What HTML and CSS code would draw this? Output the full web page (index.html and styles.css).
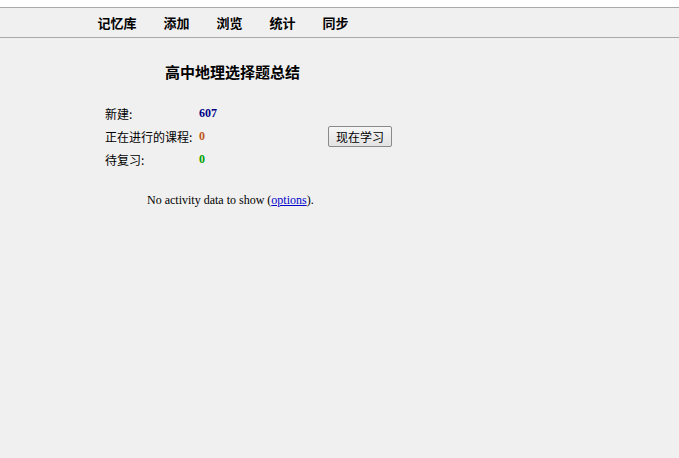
FILE: index.html
```html
<!DOCTYPE html>
<html lang="zh">
<head>
    <meta charset="UTF-8">
    <title>高中地理选择题总结</title>
    <link rel="stylesheet" href="styles.css">
</head>
<body>
    <div class="topbar">
        <nav class="nav">
            <a class="nav-item" href="#">记忆库</a>
            <a class="nav-item" href="#">添加</a>
            <a class="nav-item" href="#">浏览</a>
            <a class="nav-item" href="#">统计</a>
            <a class="nav-item" href="#">同步</a>
        </nav>
    </div>
    <div class="overview">
        <h3 class="deck-title">高中地理选择题总结</h3>
        <div class="stats">
            <div class="counts">
                <div class="row"><span class="label">新建:</span><b class="num new">607</b></div>
                <div class="row"><span class="label">正在进行的课程:</span><b class="num learn">0</b></div>
                <div class="row"><span class="label">待复习:</span><b class="num review">0</b></div>
            </div>
            <button class="study-btn">现在学习</button>
        </div>
        <p class="activity">No activity data to show (<a href="#">options</a>).</p>
    </div>
</body>
</html>
```

FILE: styles.css
```css
body {
    margin: 0;
    border-top: 7px solid #fff;
    background-color: #f0f0f0;
    font-family: "Liberation Serif", "Noto Sans CJK SC", serif;
    font-size: 12px;
    color: #000;
}

.topbar {
    height: 29px;
    border-top: 1px solid #a9a9a9;
    border-bottom: 1px solid #a9a9a9;
    background-color: #f0f0f0;
}

.nav {
    display: flex;
    padding-left: 84px;
    height: 29px;
    align-items: center;
}

.nav-item {
    padding: 0 13.5px;
    font-family: "Noto Sans CJK SC", sans-serif;
    font-size: 13px;
    font-weight: bold;
    color: #000;
    text-decoration: none;
}

.overview {
    padding-left: 105px;
}

.deck-title {
    margin: 24px 0 0 60px;
    font-family: "Noto Sans CJK SC", sans-serif;
    font-size: 15px;
    font-weight: bold;
    line-height: 20px;
}

.stats {
    display: flex;
    align-items: center;
    margin-top: 20px;
}

.counts {
    width: 223px;
}

.row {
    display: flex;
    height: 23px;
    align-items: center;
}

.label {
    width: 94px;
    font-family: "Noto Sans CJK SC", sans-serif;
    font-size: 12px;
}

.num {
    font-family: "Liberation Serif", serif;
    font-size: 12px;
}

.new { color: #000088; }
.learn { color: #c35617; }
.review { color: #00a000; }

.study-btn {
    width: 64px;
    height: 21px;
    padding: 0;
    font-family: "Noto Sans CJK SC", sans-serif;
    font-size: 12px;
    background: linear-gradient(#f6f6f6, #e2e2e2);
    border: 1px solid #8a8a8a;
    border-radius: 2px;
    color: #000;
}

.activity {
    margin: 21px 0 0 42px;
    line-height: 16px;
}

.activity a {
    color: #0000cc;
}
```
